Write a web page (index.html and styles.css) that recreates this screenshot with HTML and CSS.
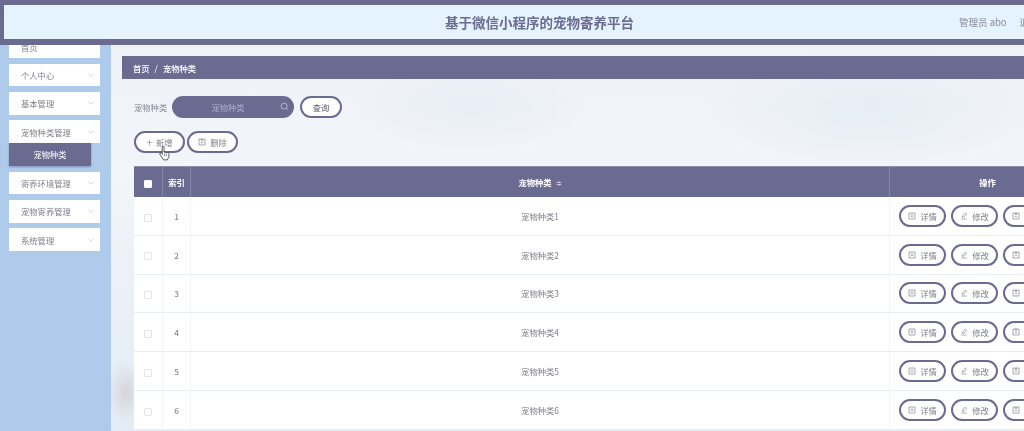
FILE: index.html
```html
<!DOCTYPE html>
<html>
	<head>
		<meta charset="UTF-8">
		<title>基于微信小程序的宠物寄养平台</title>
		<link rel="stylesheet" href="styles.css">
	</head>
	<body>
		<svg class="defs" width="0" height="0">
			<symbol id="i-doc" viewBox="0 0 12 12"><path d="M1.5 1.5h9v9h-9zM4 4.5h4M4 7h4" fill="none" stroke="currentColor"/></symbol>
			<symbol id="i-edit" viewBox="0 0 12 12"><path d="M2 10.5h8M3.5 8l.5-2.5L8 1.5l2 2-4 4z" fill="none" stroke="currentColor"/></symbol>
			<symbol id="i-del" viewBox="0 0 12 12"><path d="M1.5 1.5h9v9h-9zM5 1.500V4h2V1.500M4 7h4" fill="none" stroke="currentColor"/></symbol>
			<symbol id="i-down" viewBox="0 0 10 6"><path d="M1 1l4 4 4-4" fill="none" stroke="currentColor"/></symbol>
		</svg>
		<div class="page">
			<div class="topbar">
				<div class="title">基于微信小程序的宠物寄养平台</div>
				<div class="user"><span>管理员 abo</span><span class="logout">退出</span></div>
			</div>
			<div class="side">
				<div class="menu-item">首页</div>
				<div class="menu-item">个人中心<svg class="arrow"><use href="#i-down"/></svg></div>
				<div class="menu-item">基本管理<svg class="arrow"><use href="#i-down"/></svg></div>
				<div class="menu-item open">宠物种类管理<svg class="arrow"><use href="#i-down"/></svg></div>
				<div class="menu-sub">宠物种类</div>
				<div class="menu-item">寄养环境管理<svg class="arrow"><use href="#i-down"/></svg></div>
				<div class="menu-item">宠物寄养管理<svg class="arrow"><use href="#i-down"/></svg></div>
				<div class="menu-item">系统管理<svg class="arrow"><use href="#i-down"/></svg></div>
			</div>
			<div class="main">
				<div class="crumb"><b>首页</b><i>/</i><b>宠物种类</b></div>
				<div class="content">
					<div class="search">
						<span class="search-label">宠物种类</span>
						<div class="search-input">
							<span>宠物种类</span>
							<svg class="search-icon" viewBox="0 0 12 12"><circle cx="5.500" cy="5.500" r="4" fill="none" stroke="currentColor"/><path d="M8.500 8.500l2 2" stroke="currentColor"/></svg>
						</div>
						<button class="btn btn-query">查询</button>
					</div>
					<div class="actions">
						<button class="btn btn-add"><span class="plus">+</span>新增
							<svg class="cursor" viewBox="0 0 12 17"><path d="M3.500 10V2a1 1 0 0 1 2 0v5.500l4 .8c1 .2 1.500 1 1.500 2l-.5 3.200-1.500 2.500H5l-2-3-2-3c-.6-1 .8-2 1.500-1z" fill="#fff" stroke="#4a4a55" stroke-width="1"/><path d="M6 9v3M8 9.500V12" stroke="#4a4a55" stroke-width=".7"/></svg>
						</button>
						<button class="btn btn-del"><svg class="ico"><use href="#i-del"/></svg>删除</button>
					</div>
					<table class="grid">
						<colgroup><col class="c-check"><col class="c-index"><col class="c-name"><col class="c-op"></colgroup>
						<thead>
							<tr>
								<th><span class="check on"></span></th>
								<th>索引</th>
								<th>宠物种类<span class="sort">≑</span></th>
								<th>操作</th>
							</tr>
						</thead>
						<tbody id="rows"></tbody>
					</table>
				</div>
			</div>
		</div>
		<script>
			var rows = document.getElementById("rows");
			var html = "";
			for(var i = 1;i<=6;i++){
				html += '<tr><td><span class="check"></span></td><td class="num">' + i + '</td><td>宠物种类' + i + '</td><td class="ops">'
					+ '<button class="btn"><svg class="ico"><use href="#i-doc"/></svg>详情</button>'
					+ '<button class="btn"><svg class="ico"><use href="#i-edit"/></svg>修改</button>'
					+ '<button class="btn"><svg class="ico"><use href="#i-del"/></svg>删除</button>'
					+ '</td></tr>';
			}
			rows.innerHTML = html;
		</script>
	</body>
</html>
```
FILE: styles.css
```css
*{
	margin: 0;
	padding: 0;
	box-sizing: border-box;
}
html,body{
	width: 100%;
	height: 100%;
	overflow: hidden;
	background: #eef2f7;
}
body{
	font-family: "Noto Sans CJK SC", "Liberation Sans", sans-serif;
	font-size: 8.3px;
	color: #80808a;
}
.defs{
	position: absolute;
}
.page{
	width: 1024px;
	height: 431px;
	display: flex;
	position: relative;
	overflow: hidden;
	filter: blur(.7px);
	background:
		radial-gradient(ellipse 170px 60px at 870px 110px, #e6edf4 0%, rgba(230,237,244,0) 100%),
		radial-gradient(ellipse 120px 50px at 470px 105px, #e8eef5 0%, rgba(232,238,245,0) 100%),
		radial-gradient(ellipse 18px 30px at 126px 392px, #d4d7db 0%, rgba(212,215,219,0) 100%),
		linear-gradient(180deg, #edf1f5 0%, #f2f5f9 40%, #e4ebf4 100%);
}
.topbar{
	position: absolute;
	top: 0;
	left: 0;
	width: 100%;
	height: 45px;
	display: flex;
	align-items: center;
	padding-left: 116px;
	background: #e4f3fd;
	border-top: 5px solid #6b6b91;
	border-bottom: 6px solid #6b6b91;
	border-left: 4px solid #6b6b91;
	z-index: 2;
}
.title{
	flex: 1;
	text-align: center;
	font-size: 13.500px;
	font-weight: 700;
	color: #6b6b91;
}
.user{
	flex: none;
	width: 65px;
	display: flex;
	gap: 13px;
	font-size: 9.500px;
	color: #8a8a9e;
	white-space: nowrap;
}
.side{
	flex: none;
	width: 111px;
	padding: 35.500px 11px 0 9px;
	background: #afcbeb;
	display: flex;
	flex-direction: column;
	gap: 5.600px;
}
.menu-item{
	height: 22.700px;
	padding-left: 12px;
	display: flex;
	align-items: center;
	justify-content: space-between;
	background: #fff;
}
.menu-item.open{
	margin-bottom: -5.600px;
}
.arrow{
	width: 6px;
	height: 4px;
	margin-right: 6px;
	color: #b4b8c0;
}
.menu-sub{
	width: 82px;
	height: 23px;
	line-height: 23px;
	text-align: center;
	background: #6b6b91;
	color: #fff;
	box-shadow: 0 1px 2px rgba(60,60,90,.4);
}
.main{
	flex: 1;
	min-width: 0;
	padding: 56px 0 0 11px;
}
.crumb{
	height: 23px;
	padding-left: 11px;
	display: flex;
	align-items: center;
	gap: 5px;
	background: #6b6b91;
	color: #fff;
}
.crumb b{
	font-weight: 500;
}
.crumb i{
	font-style: normal;
}
.content{
	padding: 17px 0 0 12px;
}
.search{
	display: flex;
	align-items: center;
	height: 22px;
}
.search-label{
	width: 38px;
	color: #8a8a98;
}
.search-input{
	width: 122px;
	height: 22px;
	position: relative;
	padding-right: 10px;
	border-radius: 11px;
	background: #6b6b91;
	color: #aeaec6;
	display: flex;
	align-items: center;
	justify-content: center;
}
.search-icon{
	position: absolute;
	right: 5px;
	top: 6px;
	width: 9px;
	height: 9px;
	color: #c9c9da;
}
.btn{
	height: 22px;
	padding: 0;
	border: 2px solid #6b6b91;
	border-radius: 11px;
	background: #fff;
	font: inherit;
	color: #80808a;
	display: inline-flex;
	align-items: center;
	justify-content: center;
	flex: none;
}
.btn-query{
	width: 42px;
	margin-left: 6px;
	color: #55555f;
}
.actions{
	display: flex;
	gap: 2px;
	margin-top: 13px;
}
.btn-add,.btn-del{
	width: 51px;
	position: relative;
}
.plus{
	font-size: 12px;
	line-height: 1;
	margin-right: 3px;
	font-weight: 300;
}
.cursor{
	position: absolute;
	left: 23px;
	top: 12px;
	width: 11px;
	height: 16px;
}
.ico{
	width: 8px;
	height: 8px;
	margin-right: 4px;
	color: #80808a;
}
.grid{
	width: 952px;
	margin-top: 13px;
	table-layout: fixed;
	border-collapse: separate;
	border-spacing: 0;
	background: #fff;
}
.c-check{
	width: 29px;
}
.c-index{
	width: 28px;
}
.c-name{
	width: 699px;
}
.grid th{
	height: 31px;
	background: #6b6b91;
	color: #fff;
	font-weight: 700;
	border-right: 1px solid #8585a6;
	border-top: 1px solid #9090ad;
}
.grid td{
	height: 38.800px;
	text-align: center;
	border-right: 1px solid #f2f4f7;
	border-bottom: 1px solid #e8edf2;
}
.grid .num{
	font-weight: 500;
	color: #8a8a92;
}
.sort{
	margin-left: 4px;
	font-size: 7px;
	font-weight: 400;
	color: #c8c8d8;
}
.check{
	display: inline-block;
	width: 8px;
	height: 8px;
	vertical-align: middle;
	border: 1px solid #e4e6ea;
	border-radius: 1px;
	background: #fff;
}
.check.on{
	border-color: #fff;
}
.grid .ops{
	padding-left: 9px;
	text-align: left;
	white-space: nowrap;
}
.ops .btn{
	width: 47px;
	margin-right: 5px;
	vertical-align: middle;
}
```
